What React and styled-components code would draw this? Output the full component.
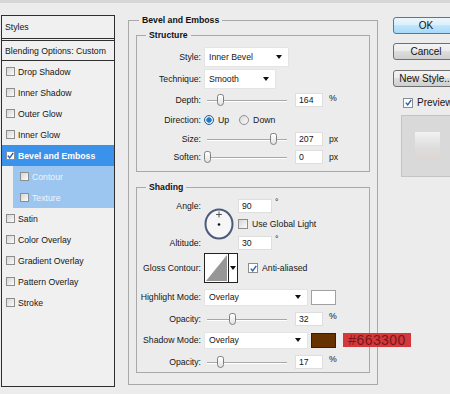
import React from 'react';
import styled, { createGlobalStyle } from 'styled-components';

// Layer Style dialog: effect list / Bevel and Emboss options / buttons

const GlobalStyle = createGlobalStyle`
  html, body {
    margin: 0;
    padding: 0;
    background: #ececec;
  }
  body {
    font-family: "Liberation Sans", Arial, sans-serif;
    font-size: 8.7px;
    color: #161616;
  }
  * { box-sizing: border-box; }
`;

const Window = styled.div`
  position: relative;
  width: 450px;
  height: 394px;
  overflow: hidden;
  display: flex;
  align-items: flex-start;
  background: linear-gradient(#d6d6d6 0, #d6d6d6 3px, #ececec 3px);
`;

/* ---------- left list ---------- */

const StylesList = styled.div`
  flex: none;
  margin: 15px 0 0 1px;
  width: 114px;
  height: 372px;
  border: 1px solid #2f2f2f;
  background: #f0f0f0;
`;

const ListHeader = styled.div`
  height: ${p => p.$h}px;
  display: flex;
  align-items: center;
  padding-left: 3px;
  border-bottom: ${p => p.$double ? '3px double #2f2f2f' : '1px solid #2f2f2f'};
`;

const ListItem = styled.div`
  height: 21px;
  display: flex;
  align-items: center;
  gap: 3px;
  margin-left: ${p => (p.$sub ? '11px' : '0')};
  padding-left: ${p => (p.$sub ? '7px' : '4px')};
  background: ${p => (p.$selected ? '#3b92ea' : p.$sub ? '#9cc6ef' : 'transparent')};
  color: ${p => (p.$selected ? '#fff' : p.$sub ? '#eef5fd' : '#161616')};
  font-weight: ${p => (p.$selected ? 'bold' : 'normal')};
`;

const Box = styled.span`
  flex: none;
  width: ${p => p.$size || 9}px;
  height: ${p => p.$size || 9}px;
  border: 1px solid #8c8d8d;
  background: ${p => (p.$checked ? '#fff' : 'linear-gradient(135deg, #d6d6d6, #fbfbfb)')};
  display: inline-flex;
  align-items: center;
  justify-content: center;
`;

const Check = ({ checked, size }) => (
  <Box $checked={checked} $size={size}>
    {checked && (
      <svg width="7" height="7" viewBox="0 0 7 7">
        <path d="M0.8 3.6 L2.7 5.8 L6.3 0.8" fill="none" stroke="#2a5fb0" strokeWidth="1.4" />
      </svg>
    )}
  </Box>
);

/* ---------- fieldsets ---------- */

const Group = styled.fieldset`
  flex: none;
  margin: ${p => p.$margin || '0'};
  min-width: 0;
  width: ${p => p.$w}px;
  border: 1px solid #a9a9a9;
  padding: ${p => p.$pad};
`;

const Legend = styled.legend`
  margin-left: ${p => p.$indent}px;
  padding: 0 3px;
  font-weight: bold;
  line-height: 12px;
  color: #111;
`;

const Row = styled.div`
  height: ${p => p.$h}px;
  display: flex;
  align-items: center;
`;

const Label = styled.span`
  flex: none;
  width: 64px;
  margin-right: 3px;
  text-align: right;
  white-space: nowrap;
`;

const Select = styled.div`
  flex: none;
  width: ${p => p.$w}px;
  height: ${p => p.$h}px;
  background: #fff;
  border: 1px solid #e4e4e4;
  display: flex;
  align-items: center;
  justify-content: space-between;
  padding: 0 6px 0 4px;
`;

const Arrow = styled.span`
  width: 0;
  height: 0;
  border-left: 3.5px solid transparent;
  border-right: 3.5px solid transparent;
  border-top: 4px solid #111;
`;

const NumBox = styled.div`
  flex: none;
  width: ${p => p.$w || 28}px;
  height: 14px;
  margin-left: ${p => p.$ml || 0}px;
  background: #fff;
  border: 1px solid #dedede;
  padding-left: 3px;
  line-height: 12px;
`;

const Unit = styled.span`
  margin-left: ${p => p.$ml || 6}px;
  margin-bottom: ${p => p.$raise || 0}px;
`;

const Track = styled.div`
  position: relative;
  flex: none;
  width: 86px;
  height: 12px;
  &::before {
    content: '';
    position: absolute;
    left: 3px;
    right: 3px;
    top: 6px;
    height: 1px;
    background: #a8a8a8;
    box-shadow: 0 1px 0 #fff;
  }
`;

const Thumb = styled.span`
  position: absolute;
  top: 0;
  width: 7px;
  height: 12px;
  margin-left: -3.5px;
  border: 1px solid #7f7f7f;
  border-radius: 3px 3px 4px 4px;
  background: linear-gradient(#ffffff, #e2e2e2);
`;

const Slider = ({ value, max }) => (
  <Track>
    <Thumb style={{ left: 3 + (value / max) * 80 }} />
  </Track>
);

const Radio = styled.span`
  flex: none;
  width: 10px;
  height: 10px;
  border-radius: 50%;
  border: 1px solid ${p => (p.$on ? '#2d5f8a' : '#8e8f8f')};
  background: ${p =>
    p.$on
      ? 'radial-gradient(circle, #1e6fb8 0, #2a7fc6 2.4px, #d9ecf8 3px)'
      : 'linear-gradient(135deg, #d8d8d8, #fbfbfb)'};
`;

const Option = styled.span`
  margin: 0 ${p => p.$mr || 0}px 0 4px;
`;

const Inline = styled.span`
  display: flex;
  align-items: center;
  gap: 4px;
  margin-left: ${p => p.$ml || 0}px;
`;

const AngleGrid = styled.div`
  display: grid;
  grid-template-columns: 64px 31px auto;
  grid-template-rows: 15px 22px 15px;
  column-gap: 3px;
  align-items: center;
`;

const AngleLabel = styled(Label)`
  grid-column: 1;
  grid-row: ${p => p.$row};
  margin-right: 0;
`;

const DialCell = styled.div`
  grid-column: 2;
  grid-row: 1 / 4;
  display: flex;
  align-items: center;
`;

const Cell = styled.div`
  grid-column: 3;
  grid-row: ${p => p.$row};
  display: flex;
  align-items: center;
`;

const Dial = () => (
  <svg width="30" height="32" viewBox="0 0 30 32">
    <ellipse cx="15" cy="16" rx="13.5" ry="14.5" fill="#f6f6f6" stroke="#4c5b7a" strokeWidth="2" />
    <path d="M15 3.5 V9.5 M12 6.5 H18" stroke="#333" strokeWidth="0.8" />
    <circle cx="15" cy="16.5" r="1.3" fill="#111" />
  </svg>
);

const ContourBox = styled.div`
  flex: none;
  display: flex;
  width: 34px;
  height: 30px;
  border: 1px solid #222;
  background: #fff;
`;

const ContourDrop = styled.div`
  flex: 1;
  border-left: 1px solid #222;
  display: flex;
  align-items: center;
  justify-content: center;
`;

const Contour = () => (
  <ContourBox>
    <svg width="23" height="28" viewBox="0 0 23 28">
      <polygon points="1,27 22,1 22,27" fill="#979797" />
    </svg>
    <ContourDrop>
      <Arrow />
    </ContourDrop>
  </ContourBox>
);

const Swatch = styled.div`
  flex: none;
  width: 25px;
  height: 15px;
  margin-left: 3px;
  border: 1px solid ${p => (p.$color === '#663300' ? '#3a1d05' : '#a0a0a0')};
  background: ${p => p.$color};
`;

const HexTag = styled.div`
  position: absolute;
  left: 343px;
  top: 333px;
  width: 68px;
  height: 14px;
  background: #d3383d;
  color: #7a1518;
  font-size: 14px;
  line-height: 14px;
  letter-spacing: 0.4px;
  text-align: center;
`;

/* ---------- right column ---------- */

const Side = styled.div`
  flex: none;
  width: 66px;
  margin: 17px 0 0 15px;
  display: flex;
  flex-direction: column;
`;

const Button = styled.div`
  height: 17px;
  margin-top: ${p => p.$mt || 0}px;
  border-radius: 3px;
  border: 1px solid ${p => (p.$primary ? '#3c7fb1' : '#707070')};
  background: ${p =>
    p.$primary
      ? 'linear-gradient(#eaf6fd 0%, #d9f0fc 50%, #bee6fd 50%, #a7d9f5 100%)'
      : 'linear-gradient(#f4f4f4 0%, #ebebeb 50%, #dddddd 50%, #cfcfcf 100%)'};
  display: flex;
  align-items: center;
  justify-content: center;
  font-size: 10px;
  color: #111;
  white-space: nowrap;
`;

const PreviewRow = styled.div`
  height: 11px;
  margin-top: 10px;
  padding-left: 10px;
  display: flex;
  align-items: center;
  gap: 4px;
  font-size: 10px;
  white-space: nowrap;
`;

const PreviewWell = styled.div`
  width: 60px;
  height: 62px;
  margin: 7px 0 0 8px;
  background: #d9d9d9;
  border: 1px solid #c3c3c3;
  padding: 16px 0 0 13px;
`;

const PreviewSample = styled.div`
  width: 25px;
  height: 28px;
  background: linear-gradient(#f3f3f3 0%, #e6e6e6 30%, #dcdcdc 60%, #ddd7d3 100%);
`;

const effects = [
  { name: 'Drop Shadow' },
  { name: 'Inner Shadow' },
  { name: 'Outer Glow' },
  { name: 'Inner Glow' },
  { name: 'Bevel and Emboss', selected: true, checked: true },
  { name: 'Contour', sub: true },
  { name: 'Texture', sub: true },
  { name: 'Satin' },
  { name: 'Color Overlay' },
  { name: 'Gradient Overlay' },
  { name: 'Pattern Overlay' },
  { name: 'Stroke' },
];

const SliderRow = ({ h, label, value, max, unit }) => (
  <Row $h={h}>
    <Label>{label}</Label>
    <Slider value={value} max={max} />
    <NumBox $ml={5}>{value}</NumBox>
    <Unit $raise={unit === '%' ? 5 : 0}>{unit}</Unit>
  </Row>
);

export default function App() {
  return (
    <>
      <GlobalStyle />
      <Window>
        <StylesList>
          <ListHeader $h={25} $double>Styles</ListHeader>
          <ListHeader $h={20}>Blending Options: Custom</ListHeader>
          {effects.map(e => (
            <ListItem key={e.name} $selected={e.selected} $sub={e.sub}>
              <Check checked={e.checked} />
              {e.name}
            </ListItem>
          ))}
        </StylesList>

        <Group $w={250} $margin="14px 0 0 13px" $pad="3px 8px 11px 7px">
          <Legend $indent={3}>Bevel and Emboss</Legend>

          <Group $w={234} $pad="5px 0 5px 0">
            <Legend $indent={9}>Structure</Legend>
            <Row $h={22}>
              <Label>Style:</Label>
              <Select $w={85} $h={20}>Inner Bevel<Arrow /></Select>
            </Row>
            <Row $h={22}>
              <Label>Technique:</Label>
              <Select $w={72} $h={20}>Smooth<Arrow /></Select>
            </Row>
            <SliderRow h={20} label="Depth:" value={164} max={1000} unit="%" />
            <Row $h={20}>
              <Label>Direction:</Label>
              <Radio $on />
              <Option $mr={10}>Up</Option>
              <Radio />
              <Option>Down</Option>
            </Row>
            <SliderRow h={18} label="Size:" value={207} max={250} unit="px" />
            <SliderRow h={18} label="Soften:" value={0} max={16} unit="px" />
          </Group>

          <Group $w={234} $margin="9px 0 0 0" $pad="5px 0 0 0">
            <Legend $indent={9}>Shading</Legend>
            <AngleGrid>
              <AngleLabel $row={1}>Angle:</AngleLabel>
              <AngleLabel $row={3}>Altitude:</AngleLabel>
              <DialCell><Dial /></DialCell>
              <Cell $row={1}>
                <NumBox $w={34}>90</NumBox>
                <Unit $ml={3} $raise={7}>°</Unit>
              </Cell>
              <Cell $row={2}>
                <Inline>
                  <Check size={10} />
                  Use Global Light
                </Inline>
              </Cell>
              <Cell $row={3}>
                <NumBox $w={34}>30</NumBox>
                <Unit $ml={3} $raise={7}>°</Unit>
              </Cell>
            </AngleGrid>
            <Row $h={36}>
              <Label>Gloss Contour:</Label>
              <Contour />
              <Inline $ml={10}>
                <Check size={10} checked />
                Anti-aliased
              </Inline>
            </Row>
            <Row $h={22}>
              <Label>Highlight Mode:</Label>
              <Select $w={104} $h={17}>Overlay<Arrow /></Select>
              <Swatch $color="#ffffff" />
            </Row>
            <SliderRow h={21} label="Opacity:" value={32} max={100} unit="%" />
            <Row $h={22}>
              <Label>Shadow Mode:</Label>
              <Select $w={104} $h={17}>Overlay<Arrow /></Select>
              <Swatch $color="#663300" />
            </Row>
            <SliderRow h={21} label="Opacity:" value={17} max={100} unit="%" />
          </Group>
        </Group>

        <Side>
          <Button $primary>OK</Button>
          <Button $mt={9}>Cancel</Button>
          <Button $mt={10}>New Style...</Button>
          <PreviewRow>
            <Check size={10} checked />
            Preview
          </PreviewRow>
          <PreviewWell>
            <PreviewSample />
          </PreviewWell>
        </Side>

        <HexTag>#663300</HexTag>
      </Window>
    </>
  );
}
